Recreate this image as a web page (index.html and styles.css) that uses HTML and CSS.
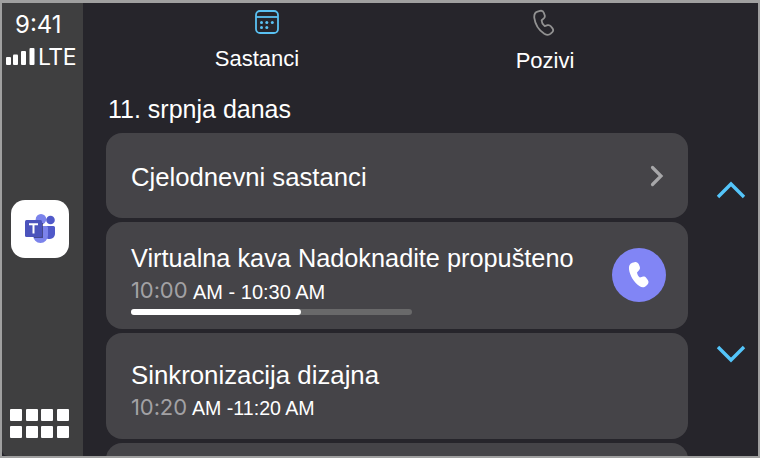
FILE: index.html
```html
<!DOCTYPE html>
<html lang="hr">
    <head>
        <title>Sastanci</title>
        <meta charset="UTF-8">
        <meta name="viewport" content="width=device-width, initial-scale=1.0">
        <link rel="stylesheet" href="styles.css">
    </head>
    <body>
        <div class="screen">
            <div class="sidebar">
                <div class="clock">9:41</div>
                <div class="network">
                    <svg class="signal" width="29" height="19" viewBox="0 0 29 19" fill="#fff">
                        <rect x="0" y="10" width="5" height="8" rx="1"/>
                        <rect x="7" y="7.500" width="5" height="10.500" rx="1"/>
                        <rect x="15" y="4" width="5" height="14" rx="1"/>
                        <rect x="23.500" y="1" width="5" height="17" rx="1"/>
                    </svg>
                    <span class="lte">LTE</span>
                </div>
                <div class="app">
                    <svg width="32" height="32" viewBox="-1 0 32 32">
                        <circle cx="16" cy="6.300" r="5.300" fill="#7b83eb"/>
                        <circle cx="25.500" cy="7" r="4.300" fill="#5059c9"/>
                        <path d="M20 13h8.500a1.500 1.500 0 0 1 1.500 1.500v6a5.500 5.500 0 0 1-8 5z" fill="#5059c9"/>
                        <path d="M9 13h12.500a1.500 1.500 0 0 1 1.500 1.500v8a7.500 7.500 0 0 1-15 0V14z" fill="#7b83eb"/>
                        <path d="M9 10h9v15H9z" fill="#33366f" opacity=".75"/>
                        <rect x="0" y="7" width="17" height="17" rx="1.500" fill="#4b53bc"/>
                        <path d="M4 11.300h9M8.500 11v9.500" stroke="#fff" stroke-width="2" fill="none"/>
                    </svg>
                </div>
                <div class="apps">
                    <i></i><i></i><i></i><i></i>
                    <i></i><i></i><i></i><i></i>
                </div>
            </div>

            <div class="main">
                <div class="tabs">
                    <div class="tab meetings">
                        <svg width="26" height="26" viewBox="0 0 26 26" fill="none" stroke="#5ac1f2" stroke-width="1.800">
                            <rect x="2" y="2" width="22" height="22" rx="4"/>
                            <path d="M2 8h22"/>
                            <g fill="#5ac1f2" stroke="none">
                                <circle cx="7.500" cy="13.500" r="1.500"/>
                                <circle cx="12.800" cy="13.500" r="1.500"/>
                                <circle cx="18.300" cy="13.500" r="1.500"/>
                                <circle cx="7.500" cy="18.500" r="1.500"/>
                                <circle cx="12.800" cy="18.500" r="1.500"/>
                            </g>
                        </svg>
                        <span>Sastanci</span>
                    </div>
                    <div class="tab calls">
                        <svg width="24" height="28" viewBox="0 0 24 28" fill="none" stroke="#929292" stroke-width="1.800" stroke-linejoin="round">
                            <path d="M5.500 2.600L8 1.900C10 1.400 11.200 2.200 11.800 3.800L12.700 6.300C13.100 7.600 12.800 8.500 11.800 9.400L9.700 11.200C9.500 13 10.900 15.700 12.700 17.100L15.600 16.200C17 15.900 17.900 16.200 18.800 17.300L20.500 19.400C21.400 20.600 21.300 22 20.300 23.100L18.700 24.700C17 26.200 14.600 26.100 12.300 24.700C7.400 21.500 3.200 15.200 2.300 8.800C2 5.800 2.800 3.500 5.500 2.600Z"/>
                        </svg>
                        <span>Pozivi</span>
                    </div>
                </div>

                <div class="day">11. srpnja danas</div>

                <div class="content">
                    <div class="list">
                        <div class="card allday">
                            <div class="title">Cjelodnevni sastanci</div>
                            <svg width="16" height="24" viewBox="0 0 16 24" fill="none" stroke="#a7a7a9" stroke-width="3.200" stroke-linecap="round">
                                <path d="M2.500 3.500l8.500 8.500-8.500 8.500"/>
                            </svg>
                        </div>
                        <div class="card now">
                            <div class="info">
                                <div class="title long">Virtualna kava Nadoknadite propušteno</div>
                                <div class="time"><b>10:00</b><span>AM - 10:30 AM</span></div>
                                <div class="bar"><div class="done"></div></div>
                            </div>
                            <div class="join">
                                <svg width="22" height="28" viewBox="0 0 22 28" fill="#fff">
                                    <path d="M4.300 1.700L6.500 1.200C8.500 .8 10.100 1.700 10.900 3.500L11.700 5.600C12.300 7.300 12 8.400 10.800 9.600L9 11.400C9.200 13.200 10.200 15.100 11.900 16.400L14.400 15.700C16 15.300 17.300 15.700 18.300 17L19.800 18.900C20.900 20.400 20.700 22.100 19.500 23.400L18 25C16.300 26.700 13.800 26.800 11.300 25.100C6 21.500 1.900 14.600 1 8.300C.7 5 1.500 2.600 4.300 1.700Z"/>
                                </svg>
                            </div>
                        </div>
                        <div class="card next">
                            <div class="info">
                                <div class="title">Sinkronizacija dizajna</div>
                                <div class="time"><b>10:20</b><span>AM -11:20 AM</span></div>
                            </div>
                        </div>
                        <div class="card"></div>
                    </div>
                    <div class="scroll">
                        <svg width="30" height="18" viewBox="0 0 30 18" fill="none" stroke="#54c5fa" stroke-width="3.400">
                            <path d="M2 16L15 3l13 13"/>
                        </svg>
                        <svg width="30" height="18" viewBox="0 0 30 18" fill="none" stroke="#54c5fa" stroke-width="3.400">
                            <path d="M2 2l13 13L28 2"/>
                        </svg>
                    </div>
                </div>
            </div>
        </div>
    </body>
</html>
```
FILE: styles.css
```css
* {
    box-sizing: border-box;
}
body {
    margin: 0;
    background: #a0a0a0;
    color: white;
    font-family: "Liberation Sans", Arial, sans-serif;
}
svg {
    display: block;
    flex: none;
}
.screen {
    display: flex;
    width: 760px;
    height: 458px;
    border: 2px solid #a0a0a0;
    border-top-width: 3px;
    background: #26252b;
    overflow: hidden;
}
.sidebar {
    display: flex;
    flex: none;
    flex-direction: column;
    width: 81px;
    background: #3f3f40;
    border-bottom-left-radius: 6px;
    font-family: Inter, sans-serif;
    font-weight: 400;
}
.clock {
    margin: 7px 0 0 13px;
    font-size: 24px;
    line-height: 30px;
}
.network {
    display: flex;
    margin: 5px 0 0 4px;
    height: 24px;
}
.signal {
    margin-top: 2px;
}
.lte {
    margin-left: 3px;
    font-size: 23px;
    letter-spacing: -0.500px;
    line-height: 24px;
}
.app {
    display: flex;
    align-items: center;
    justify-content: center;
    width: 58px;
    height: 58px;
    margin: 131px 0 0 9px;
    border-radius: 14px;
    background: white;
}
.apps {
    display: grid;
    grid-template-columns: repeat(4, 12px);
    grid-auto-rows: 12px;
    gap: 4.600px 3.600px;
    margin: 151px 0 0 8px;
}
.apps i {
    background: white;
    border-radius: 1px;
}
.main {
    flex: 1;
    display: flex;
    flex-direction: column;
    min-width: 0;
    padding-left: 23px;
}
.tabs {
    display: flex;
    height: 89px;
    padding: 6px 0 0 109px;
    font-size: 22px;
}
.tab {
    display: flex;
    flex: none;
    flex-direction: column;
    align-items: center;
    gap: 11px;
    width: 84px;
    line-height: 25px;
    margin-right: 204px;
}
.meetings svg {
    margin-left: 19px;
}
.calls {
    margin-right: 0;
}
.calls svg {
    margin-right: 2px;
}
.day {
    height: 41px;
    padding-left: 2px;
    font-size: 25px;
    line-height: 34px;
}
.content {
    display: flex;
    flex: 1;
    min-height: 0;
}
.list {
    width: 582px;
    flex: none;
    display: flex;
    flex-direction: column;
    gap: 4px;
}
.card {
    display: flex;
    flex: none;
    height: 106.500px;
    padding: 0 22px 0 25px;
    border-radius: 16px;
    background: #454448;
}
.allday {
    height: 85px;
    align-items: center;
    justify-content: space-between;
}
.title {
    font-size: 25.800px;
    line-height: 30px;
    white-space: nowrap;
}
.allday .title {
    padding-top: 2px;
    font-size: 25.700px;
}
.long {
    font-size: 25.300px;
}
.now {
    align-items: center;
    justify-content: space-between;
}
.info {
    align-self: flex-start;
    padding-top: 21px;
}
.next .info {
    padding-top: 27px;
}
.time {
    display: flex;
    height: 30px;
    font-size: 20px;
    line-height: 30px;
}
.time b {
    width: 62px;
    color: #a2a1a4;
    font-family: Inter, sans-serif;
    font-size: 22px;
    font-weight: 400;
    letter-spacing: -0.100px;
    line-height: 34px;
}
.time span {
    padding-top: 4px;
}
.next .time span {
    padding-top: 3px;
    margin-left: -1px;
    font-size: 19.600px;
}
.bar {
    width: 281px;
    height: 6px;
    margin-top: 6px;
    border-radius: 3px;
    background: #69696a;
}
.done {
    width: 170px;
    height: 6px;
    border-radius: 3px;
    background: white;
}
.join {
    display: flex;
    align-items: center;
    justify-content: center;
    width: 54px;
    height: 54px;
    border-radius: 50%;
    background: #8185f5;
}
.scroll {
    display: flex;
    flex-direction: column;
    gap: 146px;
    padding: 48px 0 0 28px;
}
```
